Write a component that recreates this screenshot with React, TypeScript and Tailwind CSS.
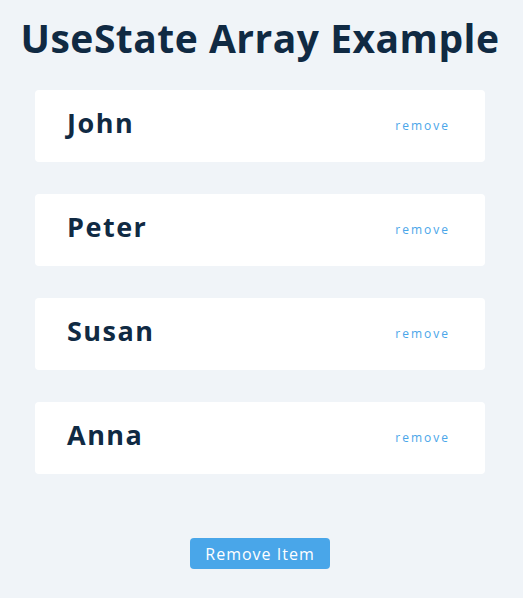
import { useState } from "react";

const people = [
  { id: 1, name: "John" },
  { id: 2, name: "Peter" },
  { id: 3, name: "Susan" },
  { id: 4, name: "Anna" },
];

export default function App() {
  const [items, setItems] = useState(people);

  return (
    <div
      className="min-h-[598px] w-full pr-[3px] bg-[#f0f4f8] text-[#102a43] flex flex-col items-center"
      style={{ fontFamily: '"Open Sans", "Noto Sans", sans-serif' }}
    >
      <h1 className="mt-[14px] text-[39px] leading-[48px] font-bold tracking-[0.5px] whitespace-nowrap">
        UseState Array Example
      </h1>

      <div className="mt-[28px] w-[450px] flex flex-col gap-[32px]">
        {items.map((p) => (
          <div key={p.id} className="h-[72px] bg-white rounded-[4px] flex items-center justify-between pl-[32px] pr-[35px]">
            <h4 className="text-[27px] leading-[36px] font-bold tracking-[1.5px] -mt-[6px]">{p.name}</h4>
            <button
              className="text-[12px] tracking-[2px] text-[#49a6e9] bg-transparent"
              onClick={() => setItems(items.filter((x) => x.id !== p.id))}
            >
              remove
            </button>
          </div>
        ))}
      </div>

      <button
        className="mt-[64px] w-[140px] h-[31px] rounded-[4px] bg-[#49a6e9] text-white text-[16px] tracking-[1px]"
        onClick={() => setItems([])}
      >
        Remove Item
      </button>
    </div>
  );
}
